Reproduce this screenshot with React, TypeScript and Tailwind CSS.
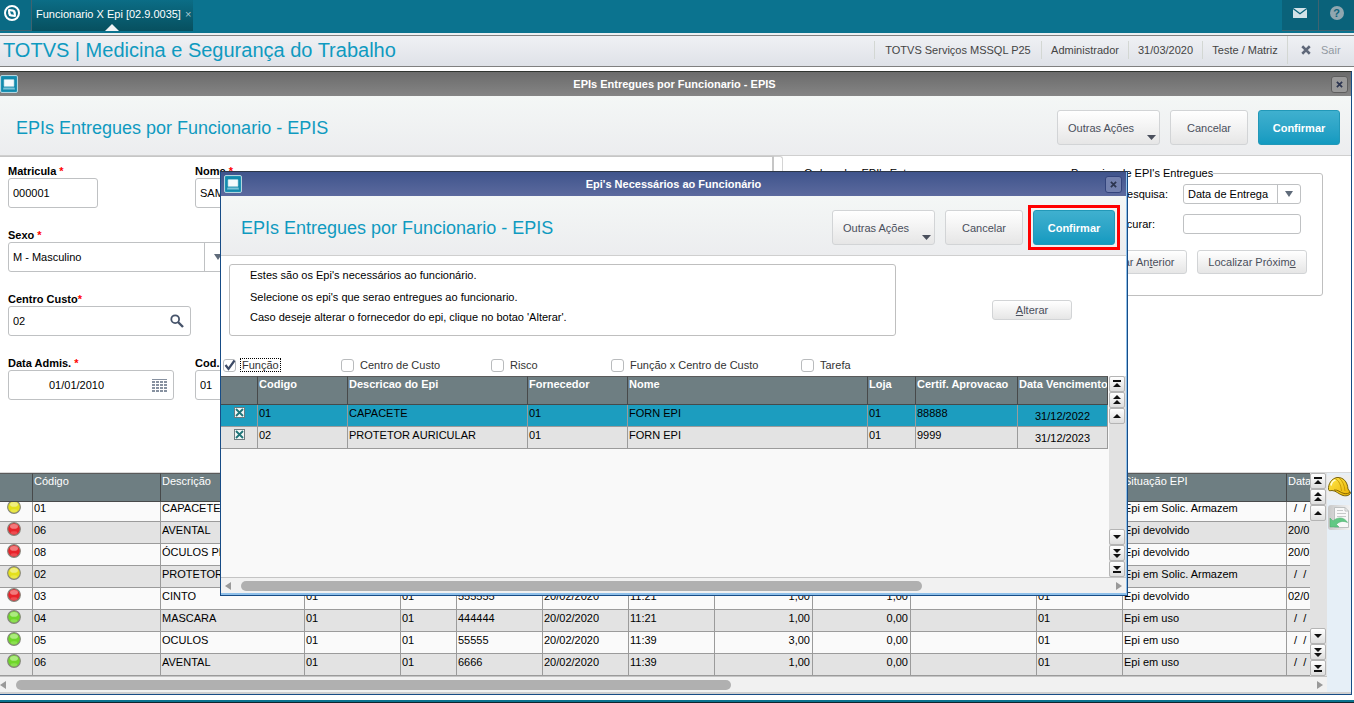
import React, { useState } from "react";
import clsx from "clsx";

const LogoIcon = () => (
  <svg width="18" height="18" viewBox="0 0 18 18" fill="none">
    <circle cx="9" cy="9" r="7" stroke="#fff" strokeWidth="2" />
    <path
      d="M5 6.2 Q5 5 6.2 5 L10.2 5.4 Q12.6 5.8 12.8 8.4 L13 11.8 Q13 13 11.8 13 L7.8 12.6 Q5.4 12.2 5.2 9.6 Z"
      fill="#fff"
    />
    <path d="M7 7.2 L10 7.8 L11 10.8 L8 10.2 Z" fill="#0b738f" />
  </svg>
);

const WindowIcon = () => (
  <svg width="18" height="18" viewBox="0 0 18 18" className="shrink-0">
    <rect x="0.5" y="0.5" width="17" height="17" rx="1.5" fill="#1d93b5" stroke="#b5d5df" />
    <rect x="2" y="2" width="14" height="14" fill="#138aac" />
    <rect x="4" y="4.5" width="10" height="7" rx="0.5" fill="#f4fafc" stroke="#9fd0de" strokeWidth="0.6" />
    <path d="M3.5 12.5 H14.5 L15 14.5 H3 Z" fill="#7cc3d8" />
  </svg>
);

const CloseIcon = ({ size = 8, color = "#2c3550" }: { size?: number; color?: string }) => (
  <svg width={size} height={size} viewBox="0 0 8 8">
    <path d="M1 1 L7 7 M7 1 L1 7" stroke={color} strokeWidth="2" />
  </svg>
);

const CaretDown = ({ color = "#5f6b7a" }: { color?: string }) => (
  <svg width="8" height="6" viewBox="0 0 8 6">
    <path d="M0 0 H8 L4 6 Z" fill={color} />
  </svg>
);

const SearchIcon = () => (
  <svg width="14" height="14" viewBox="0 0 14 14" fill="none" stroke="#46536a">
    <circle cx="5.2" cy="5.2" r="3.9" strokeWidth="1.8" />
    <path d="M8 8 L13 13" strokeWidth="2.4" />
  </svg>
);

const CalendarGridIcon = () => (
  <svg width="15" height="13" viewBox="0 0 15 13" fill="#8791a0">
    <rect width="15" height="1" />
    {[2, 5, 8, 11].map((y) =>
      [0, 4, 8, 12].map((x) => <rect key={`${x}-${y}`} x={x} y={y} width="3" height="2" />)
    )}
  </svg>
);

const HelmetIcon = () => (
  <svg width="24" height="25" viewBox="0 0 24 25">
    <defs>
      <linearGradient id="shell" x1="0" y1="0" x2="1" y2="1">
        <stop offset="0" stopColor="#ffe94a" />
        <stop offset="1" stopColor="#eab000" />
      </linearGradient>
    </defs>
    <rect x="0" y="0" width="24" height="25" rx="3" fill="#eeeeee" />
    <path
      d="M1.5 14.5 C1 9 4.5 3.5 10 2.5 C16 2 20.5 6.5 21 14 L23.5 17.5 C23.5 20 20 21.5 16 20.5 C12 19.5 9 15.5 5 15.5 C3.5 15.5 2 16.5 1.5 14.5 Z"
      fill="url(#shell)"
      stroke="#6b5600"
      strokeWidth="0.9"
    />
    <path d="M7 15 C11 14.5 13 17.5 17 18.5 C19.5 19 22 18.5 23 17" stroke="#8a6800" strokeWidth="1" fill="none" />
    <path d="M8 3.5 C12 5.5 14 10 14.5 16 M12 3 C15.5 5.5 17.5 10 18 16" stroke="#c49400" strokeWidth="0.9" fill="none" />
    <path d="M4 10.5 C4.5 7.5 6.5 5.5 8.5 5" stroke="#fffbd0" strokeWidth="1.6" fill="none" />
  </svg>
);

const ReturnDocIcon = () => (
  <svg width="23" height="25" viewBox="0 0 23 25">
    <defs>
      <linearGradient id="tile" x1="0" y1="0" x2="1" y2="0">
        <stop offset="0" stopColor="#c8c8c8" />
        <stop offset="1" stopColor="#f4f4f4" />
      </linearGradient>
    </defs>
    <rect x="0" y="0" width="23" height="25" rx="3" fill="url(#tile)" />
    <path d="M6.5 2.5 H17 L20.5 6 V22.5 H6.5 Z" fill="#f8f8f8" stroke="#bdc0c0" />
    <path d="M17 2.5 V6 H20.5" fill="none" stroke="#bdc0c0" />
    <path d="M9 5.5 H15 M9 8.5 H18 M9 11.5 H18" stroke="#c6c9c9" strokeWidth="1" />
    <path
      d="M2 13 L2 22 L11 22 L8.5 19.5 C11 16.5 15 15.5 19.5 17.5 C17 12.5 10 11 5 16 Z"
      fill="#62c884"
      stroke="#4aab6a"
      strokeWidth="0.5"
    />
  </svg>
);

const COLORS: Record<string, [string, string]> = {
  yellow: ["#e4e01c", "#f4f3a0"],
  red: ["#e8232a", "#f59a9a"],
  green: ["#6fd62a", "#c2f29c"],
};

const StatusBall = ({ color }: { color: string }) => (
  <svg width="14" height="14" viewBox="0 0 15 15" className="mx-auto">
    <circle cx="7.5" cy="7.5" r="6.8" fill={COLORS[color][0]} stroke="#85857c" strokeWidth="1.2" />
    <ellipse cx="7.5" cy="4.7" rx="4.2" ry="2.6" fill={COLORS[color][1]} opacity="0.75" />
    <ellipse cx="7.5" cy="11.4" rx="3.6" ry="1.6" fill={COLORS[color][1]} opacity="0.35" />
  </svg>
);

const SCROLL_PATHS: Record<string, string> = {
  top: "M1 1 H9 V3 H1 Z M5 4 L9 8 H1 Z",
  pageUp: "M5 0 L9 4 H1 Z M5 5 L9 9 H1 Z",
  up: "M5 3 L9 7 H1 Z",
  down: "M5 7 L9 3 H1 Z",
  pageDown: "M5 5 L9 1 H1 Z M5 10 L9 6 H1 Z",
  bottom: "M5 6 L9 2 H1 Z M1 7 H9 V9 H1 Z",
};

const ScrollButton = ({ kind }: { kind: string }) => (
  <button
    aria-label={kind}
    className="flex h-4 w-4 items-center justify-center rounded-xs border border-[#b4b4b4] bg-linear-to-b from-white to-[#dedede]"
  >
    <svg width="10" height="10" viewBox="0 0 10 10">
      <path d={SCROLL_PATHS[kind]} fill="#111" />
    </svg>
  </button>
);

const VerticalScroll = () => (
  <div className="flex w-[17px] shrink-0 flex-col items-start justify-between bg-[#e2e2e2]">
    <div>
      <ScrollButton kind="top" />
      <ScrollButton kind="pageUp" />
      <ScrollButton kind="up" />
    </div>
    <div>
      <ScrollButton kind="down" />
      <ScrollButton kind="pageDown" />
      <ScrollButton kind="bottom" />
    </div>
  </div>
);

const HorizontalScroll = ({ thumb, inset }: { thumb: string; inset?: string }) => (
  <div className={clsx("flex h-4 items-center border-t border-[#c4c4c4] bg-[#f1f1f1]", inset)}>
    <button aria-label="left" className="w-4 shrink-0">
      <svg width="6" height="8" viewBox="0 0 6 8">
        <path d="M6 0 V8 L0 4 Z" fill="#999" />
      </svg>
    </button>
    <div className="flex-1">
      <div className={clsx("h-[10px] rounded-full bg-[#b0b0b0]", thumb)} />
    </div>
    <button aria-label="right" className="shrink-0 pr-1">
      <svg width="6" height="8" viewBox="0 0 6 8">
        <path d="M0 0 V8 L6 4 Z" fill="#999" />
      </svg>
    </button>
  </div>
);

const buttonBase =
  "rounded-[3px] border border-[#d2d4d6] bg-linear-to-b from-white to-[#e6e6e6] text-[#4a4f5c]";

const ActionButtons = ({ highlight }: { highlight?: boolean }) => (
  <div className="flex gap-[10px]">
    <button className={clsx(buttonBase, "flex h-[35px] w-[103px] items-center justify-between pl-[10px] pr-[3px]")}>
      Outras Ações
      <span className="self-end pb-1">
        <svg width="9" height="5" viewBox="0 0 9 5">
          <path d="M0 0 H9 L4.5 5 Z" fill="#4a4f5c" />
        </svg>
      </span>
    </button>
    <button className={clsx(buttonBase, "h-[35px] w-[78px]")}>Cancelar</button>
    <div className={clsx("flex", highlight && "outline-[3px] outline-offset-2 outline-[#ff0000]")}>
      <button className="h-[35px] w-[82px] rounded-[3px] border border-[#2298b8] bg-linear-to-b from-[#3fb0cf] to-[#129ac0] font-bold text-white">
        Confirmar
      </button>
    </div>
  </div>
);

const WindowHeader = ({ caption, modal }: { caption: string; modal?: boolean }) => (
  <>
    <div
      className={clsx(
        "flex h-6 items-center bg-linear-to-b",
        modal ? "from-[#3f548c] to-[#5c6a9e] pl-[3px] pr-1" : "from-[#6b6b6b] to-[#858585] pr-[3px]"
      )}
    >
      <WindowIcon />
      <h2 className="flex-1 text-center font-bold text-white">{caption}</h2>
      <button
        aria-label="Fechar"
        className={clsx(
          "flex h-[17px] w-[17px] items-center justify-center rounded-[3px] border",
          modal ? "border-[#33447c] bg-[#7280ae]" : "border-[#5e5e5e] bg-[#999]"
        )}
      >
        <CloseIcon size={7} />
      </button>
    </div>
    <div
      className={clsx(
        "flex h-[60px] items-center justify-between border-b border-[#cfcfcf] bg-linear-to-b from-[#f4f7f6] to-[#ecedef] pt-1 pr-[11px]",
        modal ? "pl-5" : "pl-4"
      )}
    >
      <h1 className="text-[18px] text-[#0f9ac0]">EPIs Entregues por Funcionario - EPIS</h1>
      <ActionButtons highlight={modal} />
    </div>
  </>
);

const Field = ({
  id,
  label,
  width,
  required = true,
  children,
}: {
  id: string;
  label: string;
  width: string;
  required?: boolean;
  children: React.ReactNode;
}) => (
  <div>
    <label htmlFor={id} className="block h-[14px] leading-[14px] font-bold text-black">
      {label}
      {required && <span className="text-[#ff0000]">*</span>}
    </label>
    <div className={clsx("flex h-[30px] items-center rounded-[3px] border border-[#bfc1c3] bg-white", width)}>
      {children}
    </div>
  </div>
);

const EmployeeForm = () => (
  <div className="grid w-[774px] grid-cols-[187px_1fr] content-start gap-y-5 border-t border-r-2 border-[#c6c6c6] pl-2 pt-[7px]">
    <Field id="matricula" label="Matricula " width="w-[90px]">
      <input id="matricula" defaultValue="000001" className="w-full px-1" />
    </Field>
    <Field id="nome" label="Nome " width="w-[400px]">
      <input id="nome" defaultValue="SAMUEL" className="w-full px-1" />
    </Field>
    <div className="col-span-2">
      <Field id="sexo" label="Sexo " width="w-[224px]">
        <select id="sexo" className="h-full flex-1 appearance-none px-1">
          <option>M - Masculino</option>
          <option>F - Feminino</option>
        </select>
        <span className="pointer-events-none flex h-full w-[27px] items-center justify-center border-l border-[#bfc1c3]">
          <CaretDown />
        </span>
      </Field>
    </div>
    <div className="col-span-2">
      <Field id="custo" label="Centro Custo" width="w-[183px]">
        <input id="custo" defaultValue="02" className="w-full px-1" />
        <button aria-label="Pesquisar" className="pr-[6px]">
          <SearchIcon />
        </button>
      </Field>
    </div>
    <Field id="admis" label="Data Admis. " width="w-[166px]">
      <input id="admis" defaultValue="01/01/2010" className="w-full min-w-0 pr-2 text-center" />
      <button aria-label="Calendário" className="pr-[6px]">
        <CalendarGridIcon />
      </button>
    </Field>
    <Field id="cod" label="Cod." width="w-[90px]" required={false}>
      <input id="cod" defaultValue="01" className="w-full px-1" />
    </Field>
  </div>
);

const SearchGroups = () => (
  <div className="flex flex-1 items-start">
    <div className="h-full w-[9px] rounded-tr-[3px] border-t border-r border-[#d4d4d4]" />
    <div className="flex flex-1 items-start gap-[10px] pl-[10px] pr-7 pt-[9px]">
      <fieldset className="h-[131px] flex-1 rounded-[3px] border border-[#bfbfbf] px-[10px]">
        <legend className="leading-4">Ordem dos EPI's Entregues</legend>
      </fieldset>
      <fieldset className="h-[131px] w-[262px] rounded-[3px] border border-[#bfbfbf] pl-[9px]">
        <legend className="leading-4">Pesquisa de EPI's Entregues</legend>
        <div className="flex items-center justify-end gap-[15px] pr-[21px] pt-[3px]">
          <label htmlFor="pesquisa">Pesquisa:</label>
          <div className="flex h-5 w-[118px] items-center rounded-[3px] border border-[#bfc1c3]">
            <select id="pesquisa" className="h-full flex-1 appearance-none px-1">
              <option>Data de Entrega</option>
            </select>
            <span className="pointer-events-none flex h-full w-[23px] items-center justify-center border-l border-[#bfc1c3]">
              <CaretDown />
            </span>
          </div>
        </div>
        <div className="mt-[10px] flex items-center justify-end gap-7 pr-[21px]">
          <label htmlFor="procurar">Procurar:</label>
          <input id="procurar" className="h-5 w-[118px] rounded-[3px] border border-[#bfc1c3] px-1" />
        </div>
        <div className="mt-4 flex justify-end gap-[10px] pr-[15px]">
          <button className={clsx(buttonBase, "h-6 w-[110px]")}>
            Localizar An<u>t</u>erior
          </button>
          <button className={clsx(buttonBase, "h-6 w-[110px]")}>
            Localizar Próxim<u>o</u>
          </button>
        </div>
      </fieldset>
    </div>
  </div>
);

const deliveries = [
  ["yellow", "01", "CAPACETE", "01", "01", "88888", "20/02/2020", "11:20", "1,00", "0,00", "", "01", "Epi em Solic. Armazem", "  /  /"],
  ["red", "06", "AVENTAL", "01", "01", "6666", "20/02/2020", "11:20", "1,00", "1,00", "", "01", "Epi devolvido", "20/02/2020"],
  ["red", "08", "ÓCULOS PLUS", "01", "01", "77777", "20/02/2020", "11:20", "1,00", "1,00", "", "01", "Epi devolvido", "20/02/2020"],
  ["yellow", "02", "PROTETOR AURICULAR", "01", "01", "9999", "20/02/2020", "11:21", "1,00", "0,00", "", "01", "Epi em Solic. Armazem", "  /  /"],
  ["red", "03", "CINTO", "01", "01", "555555", "20/02/2020", "11:21", "1,00", "1,00", "", "01", "Epi devolvido", "02/03/2020"],
  ["green", "04", "MASCARA", "01", "01", "444444", "20/02/2020", "11:21", "1,00", "0,00", "", "01", "Epi em uso", "  /  /"],
  ["green", "05", "OCULOS", "01", "01", "55555", "20/02/2020", "11:39", "3,00", "0,00", "", "01", "Epi em uso", "  /  /"],
  ["green", "06", "AVENTAL", "01", "01", "6666", "20/02/2020", "11:39", "1,00", "0,00", "", "01", "Epi em uso", "  /  /"],
];

const deliveryHeads = [
  "", "Código", "Descrição", "Fornecedor", "Loja", "Num. C.A.", "Dt. Entrega", "Hr. Entrega",
  "Qtde. Entregue", "Qtd. Devolvida", "Nr. Requis.", "Local", "Situação EPI", "Data",
];

const deliveryWidths = [33, 128, 144, 96, 56, 86, 86, 86, 98, 98, 126, 86, 164, 100];

const headCell =
  "relative z-10 border-y border-r border-t-[#5a5a5a] border-r-[#47494a] border-b-[#47494a] bg-[#6e7e82] pl-px text-left align-top leading-[14px] whitespace-nowrap text-white";

const DeliveriesTable = () => (
  <div className="flex border-t border-[#d8d8d8]">
    <div className="min-w-0 flex-1">
      <div className="flex">
        <div className="w-0 flex-1 overflow-hidden">
          <table className="w-[1387px] table-fixed border-separate border-spacing-0">
            <colgroup>
              {deliveryWidths.map((w, i) => (
                <col key={i} style={{ width: w }} />
              ))}
            </colgroup>
            <thead>
              <tr className="h-[29px]">
                {deliveryHeads.map((head, i) => (
                  <th key={i} className={clsx(headCell, "font-normal")}>
                    {head}
                  </th>
                ))}
              </tr>
            </thead>
            <tbody>
              {deliveries.map((row, r) => (
                <tr key={r} className={clsx(r === 0 ? "h-5" : "h-[22px]", r % 2 ? "bg-[#e3e3e3]" : "bg-[#fafafa]")}>
                  {row.map((cell, c) => (
                    <td
                      key={c}
                      className={clsx(
                        "border-r border-b border-[#9b9b9b] align-top whitespace-pre",
                        c === 8 || c === 9 ? "pr-[2px] text-right" : "pl-px"
                      )}
                    >
                      <div className={clsx("h-4 leading-4", r === 0 && "-mt-[2px]", c === 0 && "pr-[6px]")}>
                        {c === 0 ? <StatusBall color={cell} /> : cell}
                      </div>
                    </td>
                  ))}
                </tr>
              ))}
            </tbody>
          </table>
        </div>
        <VerticalScroll />
      </div>
      <HorizontalScroll thumb="w-[715px]" />
    </div>
    <div className="flex w-6 shrink-0 flex-col items-center gap-[5px] bg-[#e6eff7] pt-[2px]">
      <button aria-label="EPI">
        <HelmetIcon />
      </button>
      <button aria-label="Devolução">
        <ReturnDocIcon />
      </button>
    </div>
  </div>
);

const filters = ["Função", "Centro de Custo", "Risco", "Função x Centro de Custo", "Tarefa"];

const FilterRow = () => {
  const [checked, setChecked] = useState<string[]>(["Função"]);

  const toggle = (name: string) =>
    setChecked((prev) => (prev.includes(name) ? prev.filter((n) => n !== name) : [...prev, name]));

  return (
    <div className="mt-[22px] mb-1 grid h-[14px] grid-cols-[118px_150px_120px_190px_1fr] items-center pl-[2px] text-[#333]">
      {filters.map((name, i) => (
        <label key={name} className="flex items-center gap-[5px]">
          <span className="grid">
            <input
              type="checkbox"
              checked={checked.includes(name)}
              onChange={() => toggle(name)}
              className="h-[13px] w-[13px] appearance-none rounded-[3px] border border-[#b9bbbd] bg-white [grid-area:1/1]"
            />
            {checked.includes(name) && (
              <svg width="13" height="13" viewBox="0 0 13 13" className="pointer-events-none [grid-area:1/1]">
                <path d="M2.5 6 L5.5 10 L11.5 1.5" fill="none" stroke="#3e4b66" strokeWidth="2.2" />
              </svg>
            )}
          </span>
          <span className={clsx("px-px leading-3", i === 0 && "outline-1 outline-dotted outline-black")}>
            {name}
          </span>
        </label>
      ))}
    </div>
  );
};

const requiredEpis = [
  ["01", "CAPACETE", "01", "FORN EPI", "01", "88888", "31/12/2022"],
  ["02", "PROTETOR AURICULAR", "01", "FORN EPI", "01", "9999", "31/12/2023"],
];

const requiredHeads = [
  "", "Codigo", "Descricao do Epi", "Fornecedor", "Nome", "Loja", "Certif. Aprovacao", "Data Vencimento",
];

const requiredWidths = [37, 90, 180, 100, 240, 48, 102, 90];

const RequiredTable = () => (
  <div className="flex h-[201px] bg-[#f9f9f9]">
    <div className="w-0 flex-1 overflow-hidden">
      <table className="w-[887px] table-fixed border-separate border-spacing-0">
        <colgroup>
          {requiredWidths.map((w, i) => (
            <col key={i} style={{ width: w }} />
          ))}
        </colgroup>
        <thead>
          <tr className="h-[29px]">
            {requiredHeads.map((head, i) => (
              <th key={i} className={clsx(headCell, "overflow-hidden font-bold")}>
                {head}
              </th>
            ))}
          </tr>
        </thead>
        <tbody>
          {requiredEpis.map((row, r) => (
            <tr key={r} className={clsx("h-[22px]", r === 0 ? "bg-[#1c9dbf]" : "bg-[#e3e3e3]")}>
              <td className="border-r border-b border-[#9b9b9b] align-top">
                <label className="mx-auto mt-[2px] grid w-[11px]">
                  <input
                    type="checkbox"
                    defaultChecked
                    aria-label={row[1]}
                    className="h-[11px] w-[11px] appearance-none border border-[#6d7b80] bg-[#f3f7f7] [grid-area:1/1]"
                  />
                  <svg width="11" height="11" viewBox="0 0 11 11" className="pointer-events-none [grid-area:1/1]">
                    <path d="M2 2 L9 9 M9 2 L2 9" stroke="#1f7478" strokeWidth="1.8" />
                  </svg>
                </label>
              </td>
              {row.map((cell, c) => (
                <td
                  key={c}
                  className={clsx(
                    "border-r border-b border-[#9b9b9b] align-top",
                    c === 6 ? "pt-[3px] text-center" : "pl-px"
                  )}
                >
                  <div className="h-4 leading-4">{cell}</div>
                </td>
              ))}
            </tr>
          ))}
        </tbody>
      </table>
    </div>
    <VerticalScroll />
  </div>
);

const RequiredEpisDialog = () => (
  <div
    role="dialog"
    className="absolute top-[171px] left-[220px] z-20 w-[908px] border border-[#174c86] border-t-[#2b3648] bg-white"
  >
    <div className="border-r border-b-2 border-[#8fc0ea]">
      <WindowHeader caption="Epi's Necessários ao Funcionário" modal />
      <div className="flex items-start pt-2 pl-2">
        <div className="h-[72px] w-[667px] rounded-[3px] border border-[#bfbfbf] pt-[2px] pl-5">
          <p className="leading-4">Estes são os Epi's necessários ao funcionário.</p>
          <p className="mt-[6px] leading-4">Selecione os epi's que serao entregues ao funcionario.</p>
          <p className="mt-1 leading-4">Caso deseje alterar o fornecedor do epi, clique no botao 'Alterar'.</p>
        </div>
        <button className={clsx(buttonBase, "mt-9 ml-24 h-5 w-20")}>
          <u>A</u>lterar
        </button>
      </div>
      <FilterRow />
      <RequiredTable />
      <HorizontalScroll thumb="w-[681px]" inset="pl-1" />
    </div>
  </div>
);

const TopBar = () => (
  <header className="flex h-[35px] items-start justify-between border-b-2 border-[#edf0f2] bg-[#0b738f]">
    <div className="flex h-[31px]">
      <button
        aria-label="Início"
        className="flex w-8 items-center border-r border-b border-[#3f6370] bg-[#0a6a84] pb-1 pl-[3px]"
      >
        <LogoIcon />
      </button>
      <div className="relative flex w-[161px] items-center bg-linear-to-b from-[#0b6d86] to-[#07505f] pb-1 pl-1 text-white">
        <a href="#epi" className="whitespace-nowrap">
          Funcionario X Epi [02.9.0035]
        </a>
        <button aria-label="Fechar aba" className="ml-1 leading-3 text-[#a9c9d1]">
          ×
        </button>
        <svg width="14" height="7" viewBox="0 0 14 7" className="absolute bottom-0 left-[73px]">
          <path d="M7 0 L14 7 H0 Z" fill="#f2f4f6" />
        </svg>
      </div>
    </div>
    <div className="flex h-[31px]">
      <button
        aria-label="Mensagens"
        className="flex w-[37px] items-center justify-center border-r border-b border-[#3f6370] bg-[#0a627a] pb-1"
      >
        <svg width="14" height="10" viewBox="0 0 14 10">
          <rect width="14" height="10" rx="0.5" fill="#d3e2e8" />
          <path d="M0 0.5 L7 5.8 L14 0.5" fill="none" stroke="#0a627a" strokeWidth="1.3" />
        </svg>
      </button>
      <button
        aria-label="Ajuda"
        className="flex w-[35px] items-center justify-center border-b border-[#3f6370] bg-[#0a627a] pb-1"
      >
        <span className="h-[14px] w-[14px] rounded-full bg-[#90a7b0] text-center leading-[14px] font-bold text-[#0a627a]">
          ?
        </span>
      </button>
    </div>
  </header>
);

const userCell = "flex h-[18px] items-center justify-center border-l border-[#d3d7d3] whitespace-nowrap";

const UserBar = () => (
  <div className="flex h-8 items-center justify-between border-y border-[#808080] bg-linear-to-b from-[#eff1f4] to-[#dfe2e8] pb-[2px]">
    <span className="pl-[3px] text-[20px] text-[#0f9ac0]">TOTVS | Medicina e Segurança do Trabalho</span>
    <div className="flex items-center text-[#444]">
      <span className={clsx(userCell, "w-[167px]")}>TOTVS Serviços MSSQL P25</span>
      <span className={clsx(userCell, "w-[87px]")}>Administrador</span>
      <span className={clsx(userCell, "w-[74px]")}>31/03/2020</span>
      <span className={clsx(userCell, "w-[85px]")}>Teste / Matriz</span>
      <button className="flex h-7 w-[67px] items-center gap-[10px] border-l border-[#d3d7d3] pl-[13px] text-[#9299a2]">
        <CloseIcon size={10} color="#5f6879" />
        Sair
      </button>
    </div>
  </div>
);

const App = () => (
  <div className="relative flex min-h-screen flex-col overflow-hidden bg-white font-['Liberation_Sans',Arial,sans-serif] text-[11px] leading-4 text-black">
    <TopBar />
    <UserBar />
    <main className="mt-1 mr-[2px] mb-[5px] flex flex-1 flex-col border-t border-r border-b border-[#174c86] border-t-[#2f332f]">
      <WindowHeader caption="EPIs Entregues por Funcionario - EPIS" />
      <div className="flex min-h-[316px] flex-1">
        <EmployeeForm />
        <SearchGroups />
      </div>
      <DeliveriesTable />
      <div className="h-[2px] bg-[#cfcfcf]" />
    </main>
    <footer className="h-[3px] border-t-2 border-[#0b738f] bg-[#10242c]" />
    <RequiredEpisDialog />
  </div>
);

export default App;
